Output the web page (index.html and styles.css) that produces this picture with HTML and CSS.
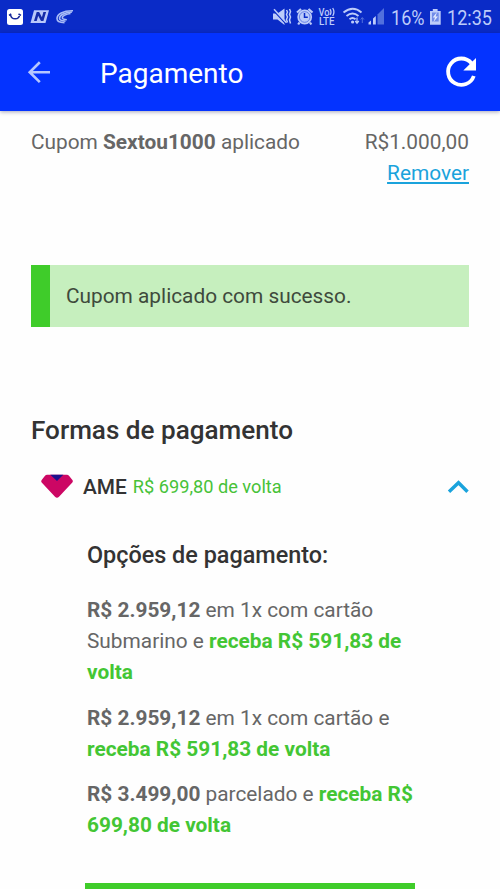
FILE: index.html
```
<!DOCTYPE html>
<html lang="pt-BR">
<head>
<meta charset="utf-8">
<title>Pagamento</title>
<link rel="stylesheet" href="styles.css">
</head>
<body>
<div class="status">
  <svg class="status-left" width="80" height="33" viewBox="0 0 80 33">
    <rect x="7" y="9" width="16" height="16" rx="2.5" fill="#fff"/>
    <path d="M10.500 14.500q.5 4.300 4.700 4.300q4 0 4.500-4.300M9 15.300l2.200-1.500M18.500 14l2.500 1.300" fill="none" stroke="#17299a" stroke-width="1.500"/>
    <path d="M34 10.300h15L45.500 23H30.500z" fill="#b9c8fa"/>
    <path d="M34 21l2.700-9h2.400l2.800 5.300 1.500-5.300h2.700l-2.700 9h-2.400l-2.800-5.300-1.500 5.300z" fill="#152ca9"/>
    <g fill="none" stroke="#a9bcf7" stroke-width="1.600"><path d="M73 10.800C63 10.500 57 14.500 57 18.500q0 4 7.500 4.200"/><path d="M72 12C64 12.300 59.500 15.500 59.500 18.300q0 2.500 6 2.900"/><path d="M70.500 13.500C66 14 62.300 16 62.300 17.800q0 1.600 4.500 2"/></g>
  </svg>
  <svg class="status-icons" width="117" height="33" viewBox="270 0 117 33">
    <g fill="#bdccfa">
      <path d="M273 13.500h4.500l7-5v16.500l-7-5.500H273z"/>
      <path d="M273.500 10.500l12.500 13.500" stroke="#0a2bc7" stroke-width="1.200"/>
      <path d="M274 9.300l12.500 13.500" stroke="#bdccfa" stroke-width="1.500"/>
      <path d="M286.500 10l1 2-1 2.500 1 2.500-1 2.500 1 3M289.500 9l1 2.500-1 3 1 2.500-1 3 1 3.500" fill="none" stroke="#bdccfa" stroke-width="1.500"/>
      <circle cx="304.700" cy="17" r="7.400"/>
      <path d="M297 12.500l4-3.500M308.500 9l4 3.500M299.500 22.500l-1.300 2M310 22.500l1.300 2" stroke="#bdccfa" stroke-width="2.200"/>
      <circle cx="304.700" cy="17" r="5.300" fill="none" stroke="#4461dc" stroke-width=".7"/>
      <path d="M304.500 13v4.300h3.300" fill="none" stroke="#0a2bc7" stroke-width="1.500"/>
      <text class="volte" x="318.500" y="15.500" textLength="11" lengthAdjust="spacingAndGlyphs">Vo</text>
      <text class="volte" x="319" y="25" textLength="15.500" lengthAdjust="spacingAndGlyphs">LTE</text>
      <path d="M330 9q2 3 0 6M332.700 8q2.500 4 0 8" fill="none" stroke="#bdccfa" stroke-width="1.300"/>
      <g fill="none" stroke="#bdccfa" stroke-width="1.900"><path d="M343.500 12.500q9.300-7.500 18 0"/><path d="M346.500 16q6-5 12 0"/><path d="M349.500 19.200q3-2.500 6 0"/></g>
      <circle cx="352.600" cy="22" r="1.600"/>
      <path d="M357 17.500v5M355.200 21l1.800 2.200 1.800-2.200" fill="none" stroke="#bdccfa" stroke-width="1.200"/>
      <path d="M362.300 23v-5M360.700 19.500l1.600-2 1.600 2" fill="none" stroke="#5270dd" stroke-width="1"/>
      <path d="M368.500 24.500v-2l2.500-2v4zM373 24.500v-6l2.800-2.500v8.500z"/>
      <path d="M377.500 24.500V14.500L384 8v16.500z" fill="#5270dd"/>
    </g>
  </svg>
  <span class="percent">16%</span>
  <svg class="battery" width="12" height="33" viewBox="429 0 12 33">
    <path d="M430 11h2.800V9h4.800v2h3.100v13.800H430z" fill="#bdccfa"/>
    <path d="M432 12.500h6.700v9H432z" fill="#708be8"/>
    <path d="M437 12l-4.300 5.500h2.300l-1.500 4.500 4.500-5.500h-2.400z" fill="#e0e8ff"/>
  </svg>
  <span class="clock">12:35</span>
</div>
<header class="bar">
  <svg class="back" width="24" height="24" viewBox="27 60 24 24"><path d="M50 72.200H30M39.800 62.300L29.700 72.200l10.100 10" fill="none" stroke="#b5c6ff" stroke-width="2.600"/></svg>
  <h1 class="title">Pagamento</h1>
  <svg class="reload" width="34" height="34" viewBox="444 55 34 34"><path d="M471.500 63.300A13.200 13.200 0 1 0 473.800 76" fill="none" stroke="#fff" stroke-width="3.800"/><path d="M476 58v12.500h-12.700z" fill="#fff"/></svg>
</header>
<main class="page">
  <section class="coupon">
    <div class="coupon-name">Cupom <b>Sextou1000</b> aplicado</div>
    <div class="coupon-value">R$1.000,00<br><a class="remove">Remover</a></div>
  </section>
  <div class="notice">Cupom aplicado com sucesso.</div>
  <h2 class="heading">Formas de pagamento</h2>
  <div class="method">
    <svg class="ame" width="32" height="25" viewBox="0 0 32 25"><path d="M6 .8h20Q27 .8 28 1.800L31.400 6q1 1.400-.3 2.800L18 22.800q-2 2-4 0L.9 8.800Q-.4 7.400.7 6L4 1.800Q5 .8 6 .8z" fill="#cc0764"/><path d="M9.300.8h13L16 7z" fill="#1c118c"/></svg>
    <span class="ame-name">AME</span>
    <span class="cashback">R$ 699,80 de volta</span>
    <svg class="chevron" width="22" height="14" viewBox="0 0 22 14"><path d="M2 12.800L11.500 3.700l9 9.100" fill="none" stroke="#1aa3dc" stroke-width="3.400"/></svg>
  </div>
  <section class="options">
    <h3 class="options-title">Opções de pagamento:</h3>
    <p><b>R$ 2.959,12</b> em 1x com cartão<br>Submarino e <b class="green">receba R$ 591,83 de<br>volta</b></p>
    <p><b>R$ 2.959,12</b> em 1x com cartão e<br><b class="green">receba R$ 591,83 de volta</b></p>
    <p><b>R$ 3.499,00</b> parcelado e <b class="green">receba R$<br>699,80 de volta</b></p>
  </section>
  <div class="button"></div>
</main>
</body>
</html>
```
FILE: styles.css
```
* { box-sizing: border-box; }
body {
  margin: 0;
  height: 889px;
  overflow: hidden;
  background: #fefefe;
  color: #666;
  font: 20.83px/31px Roboto, sans-serif;
  white-space: nowrap;
}
h1, h2, h3, p { margin: 0; }
svg { display: block; flex: none; }
.status {
  display: flex;
  height: 33px;
  background: #0a2bc7;
  color: #bdccfa;
  font-size: 20.5px;
  line-height: 36px;
}
.status-icons { margin-left: 190px; }
.volte { font: 500 10px/1 Roboto, sans-serif; }
.percent, .clock { transform: scaleX(.88); transform-origin: 0 50%; }
.percent { width: 38px; margin-left: 4px; }
.clock { margin-left: 6px; }
.bar {
  display: flex;
  align-items: center;
  height: 78px;
  padding: 0 22px 0 27px;
  background: #0433ff;
  box-shadow: 0 1px 4px rgba(0, 0, 60, .35);
  color: #fff;
}
.title { margin: 2px auto 0 49px; font-size: 28px; font-weight: 400; }
.page { padding: 16px 31px 0; }
.coupon { display: flex; justify-content: space-between; }
.coupon-value { text-align: right; }
.remove { color: #1aa3dc; text-decoration: underline; }
.notice {
  height: 62px;
  margin-top: 76px;
  padding-left: 16px;
  border-left: 19px solid #3fcc2a;
  background: #c6efbe;
  color: #3e4a3c;
  line-height: 63px;
}
.heading { margin-top: 88px; color: #333; font-size: 26.1px; font-weight: 500; }
.method { display: flex; align-items: center; height: 32px; margin-top: 24px; padding-left: 10px; }
.ame-name { margin: 2px 0 0 10px; color: #333; font-weight: 500; }
.cashback { margin-left: 6px; color: #46c238; font-size: 18.2px; }
.chevron { margin-left: auto; }
.options { padding: 38px 0 0 56px; }
.options-title { margin-bottom: 24px; color: #333; font-size: 23.4px; font-weight: 500; }
.options p + p { margin-top: 14.5px; }
.green { color: #43c634; }
.button { height: 40px; margin: 42px 54px 0; background: #3fcc2a; }
```
